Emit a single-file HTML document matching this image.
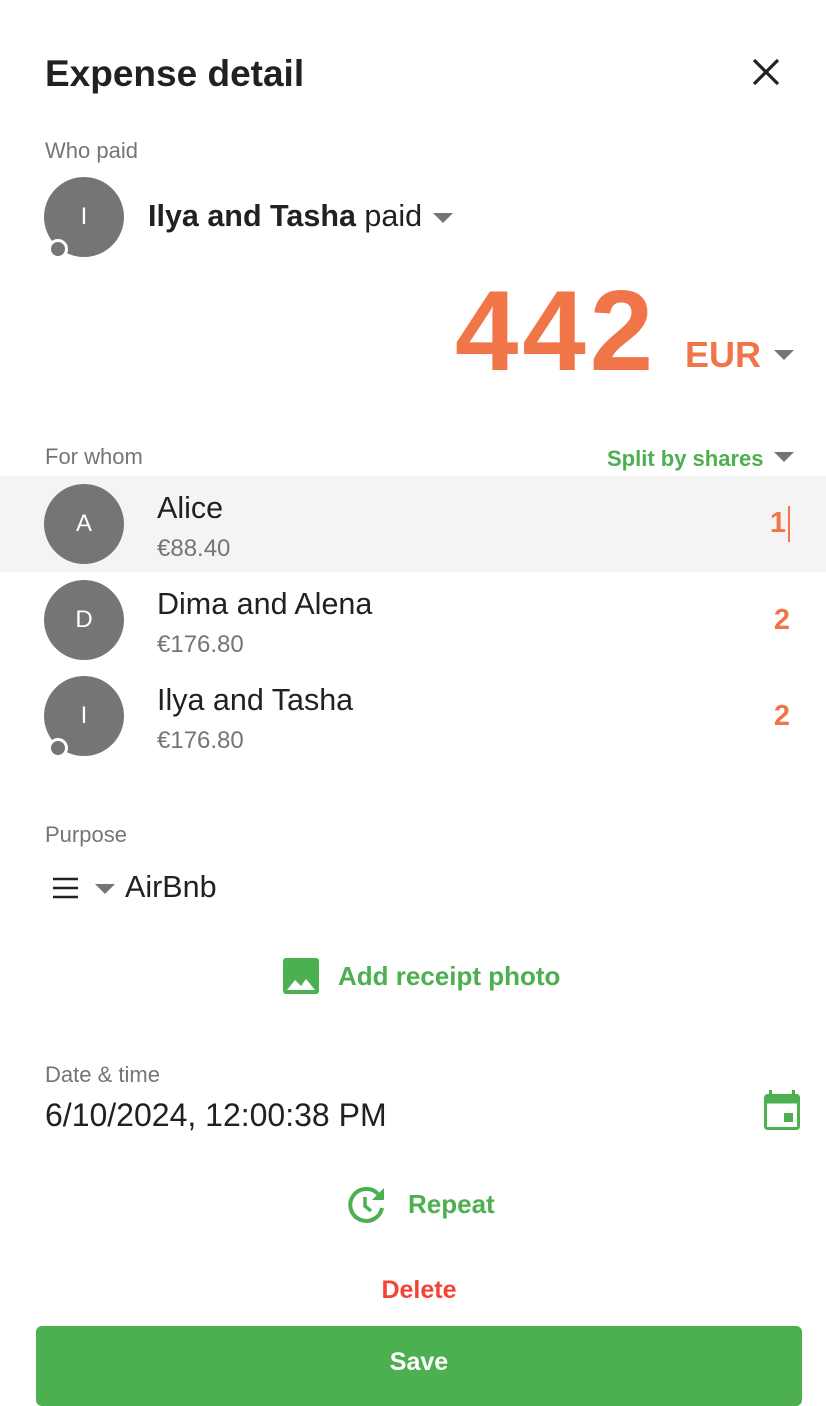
<!DOCTYPE html>
<html><head><style>
body{margin:0;width:826px;height:1398px;position:relative;background:#fff;font-family:"Liberation Sans",Arial,sans-serif;color:#212121;overflow:hidden}
.a{position:absolute;white-space:nowrap;line-height:1}
.lab{font-size:22px;color:#757575}
.av{position:absolute;width:80px;height:80px;border-radius:50%;background:#757575;color:#fff;font-size:24px;text-align:center;line-height:80px;left:44px}
.dot{position:absolute;width:14px;height:14px;border-radius:50%;background:#757575;border:3px solid #fff;left:48px}
.car{position:absolute;width:0;height:0;border-left:10px solid transparent;border-right:10px solid transparent;border-top:10px solid #757575}
.name{font-size:30.5px}
.amt{font-size:24px;color:#757575}
.num{font-size:29px;font-weight:bold;color:#f07548;right:36px}
.g{color:#4caf50}
</style></head><body>
<div class="a" style="left:45px;top:55px;font-size:37px;font-weight:bold">Expense detail</div>
<svg class="a" style="left:752px;top:58px" width="28" height="28" viewBox="0 0 28 28"><path d="M2 2L26 26M26 2L2 26" stroke="#212121" stroke-width="3.2"/></svg>
<div class="a lab" style="left:45px;top:140px">Who paid</div>
<div class="av" style="top:177px">I</div><div class="dot" style="top:239px"></div>
<div class="a" style="left:148px;top:201px;font-size:30.5px"><b>Ilya and Tasha</b> paid</div>
<div class="car" style="left:433px;top:213px"></div>
<div class="a" style="left:455px;top:275px;font-size:114px;font-weight:bold;color:#f07548;letter-spacing:4px">442</div>
<div class="a" style="left:685px;top:337px;font-size:36px;font-weight:bold;color:#f07548">EUR</div>
<div class="car" style="left:774px;top:350px"></div>
<div class="a lab" style="left:45px;top:446px">For whom</div>
<div class="a g" style="left:607px;top:448px;font-size:22px;font-weight:bold">Split by shares</div>
<div class="car" style="left:774px;top:452px"></div>
<div style="position:absolute;left:0;top:476px;width:826px;height:96px;background:#f4f4f4"></div>
<div class="av" style="top:484px">A</div>
<div class="a name" style="left:157px;top:493px">Alice</div>
<div class="a amt" style="left:157px;top:537px">€88.40</div>
<div class="a num" style="right:40px;top:509px">1</div>
<div style="position:absolute;left:788px;top:506px;width:2px;height:36px;background:#f07548"></div>
<div class="av" style="top:580px">D</div>
<div class="a name" style="left:157px;top:589px">Dima and Alena</div>
<div class="a amt" style="left:157px;top:633px">€176.80</div>
<div class="a num" style="top:606px">2</div>
<div class="av" style="top:676px">I</div><div class="dot" style="top:738px"></div>
<div class="a name" style="left:157px;top:685px">Ilya and Tasha</div>
<div class="a amt" style="left:157px;top:729px">€176.80</div>
<div class="a num" style="top:702px">2</div>
<div class="a lab" style="left:45px;top:824px">Purpose</div>
<svg class="a" style="left:53px;top:877px" width="25" height="22"><path d="M0 2H25M0 11H25M0 20H25" stroke="#212121" stroke-width="2.6"/></svg>
<div class="car" style="left:95px;top:884px"></div>
<div class="a" style="left:125px;top:872px;font-size:30.5px">AirBnb</div>
<svg class="a" style="left:283px;top:958px" width="36" height="36" viewBox="0 0 36 36"><rect width="36" height="36" rx="3" fill="#4caf50"/><path d="M4 32L12 22L18 28L23 21L32 32Z" fill="#fff"/></svg>
<div class="a g" style="left:338px;top:963px;font-size:26px;font-weight:bold">Add receipt photo</div>
<div class="a lab" style="left:45px;top:1064px">Date &amp; time</div>
<div class="a" style="left:45px;top:1099px;font-size:32px">6/10/2024, 12:00:38 PM</div>
<svg class="a" style="left:764px;top:1090px" width="36" height="40" viewBox="0 0 36 40"><rect x="5" y="0" width="3" height="6" fill="#4caf50"/><rect x="28" y="0" width="3" height="6" fill="#4caf50"/><rect x="1.5" y="5.5" width="33" height="33" rx="2" fill="none" stroke="#4caf50" stroke-width="3"/><rect x="1.5" y="5.5" width="33" height="8" fill="#4caf50"/><rect x="20" y="23" width="9" height="9" fill="#4caf50"/></svg>
<svg class="a" style="left:348px;top:1186px" width="40" height="38" viewBox="0 0 40 38"><path d="M30 8A16 16 0 1 0 34 22" fill="none" stroke="#4caf50" stroke-width="4"/><path d="M24 14L36 2L36 14Z" fill="#4caf50"/><path d="M17 11V20L23 25" fill="none" stroke="#4caf50" stroke-width="3.5"/></svg>
<div class="a g" style="left:408px;top:1191px;font-size:26px;font-weight:bold">Repeat</div>
<div class="a" style="left:0;width:838px;text-align:center;top:1278px;font-size:25px;font-weight:bold;color:#f44336">Delete</div>
<div style="position:absolute;left:36px;top:1326px;width:766px;height:80px;border-radius:6px;background:#4caf50"></div>
<div class="a" style="left:36px;width:766px;text-align:center;top:1350px;font-size:25px;color:#fff;font-weight:bold">Save</div>
</body></html>
